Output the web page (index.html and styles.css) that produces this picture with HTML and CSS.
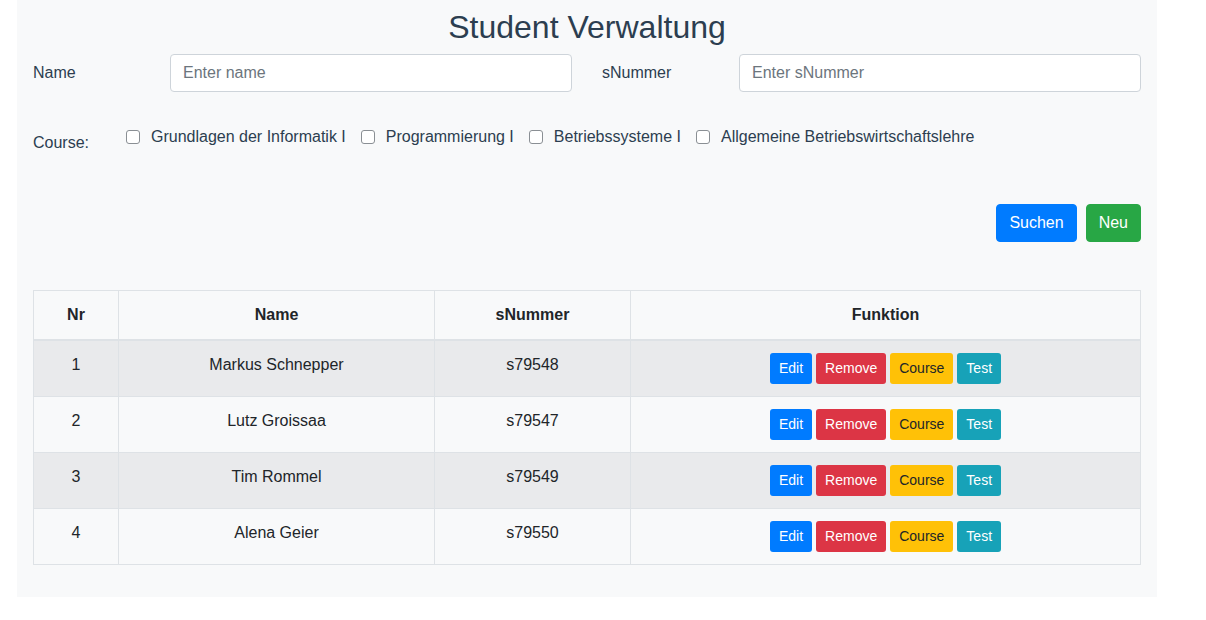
FILE: index.html
```html
<!DOCTYPE html>
<html lang="de">
<head>
<meta charset="utf-8">
<title>Student Verwaltung</title>
<link rel="stylesheet" href="styles.css">
</head>
<body>
<div class="page">
  <h2 class="title">Student Verwaltung</h2>
  <div class="fields">
    <div class="field">
      <label class="field-label">Name</label>
      <input class="form-input" type="text" placeholder="Enter name">
    </div>
    <div class="field">
      <label class="field-label">sNummer</label>
      <input class="form-input" type="text" placeholder="Enter sNummer">
    </div>
  </div>
  <div class="courses">
    <span class="courses-label">Course:</span>
    <div class="checks">
      <label class="check"><input type="checkbox" class="box"><span>Grundlagen der Informatik I</span></label>
      <label class="check"><input type="checkbox" class="box"><span>Programmierung I</span></label>
      <label class="check"><input type="checkbox" class="box"><span>Betriebssysteme I</span></label>
      <label class="check"><input type="checkbox" class="box"><span>Allgemeine Betriebswirtschaftslehre</span></label>
    </div>
  </div>
  <div class="actions">
    <button class="btn btn-blue">Suchen</button>
    <button class="btn btn-green">Neu</button>
  </div>
  <table class="table">
    <thead>
      <tr><th class="c-nr">Nr</th><th class="c-name">Name</th><th class="c-snr">sNummer</th><th>Funktion</th></tr>
    </thead>
    <tbody>
      <tr class="odd"><td>1</td><td>Markus Schnepper</td><td>s79548</td><td><div class="ops"><button class="sbtn blue">Edit</button><button class="sbtn red">Remove</button><button class="sbtn yellow">Course</button><button class="sbtn teal">Test</button></div></td></tr>
      <tr><td>2</td><td>Lutz Groissaa</td><td>s79547</td><td><div class="ops"><button class="sbtn blue">Edit</button><button class="sbtn red">Remove</button><button class="sbtn yellow">Course</button><button class="sbtn teal">Test</button></div></td></tr>
      <tr class="odd"><td>3</td><td>Tim Rommel</td><td>s79549</td><td><div class="ops"><button class="sbtn blue">Edit</button><button class="sbtn red">Remove</button><button class="sbtn yellow">Course</button><button class="sbtn teal">Test</button></div></td></tr>
      <tr><td>4</td><td>Alena Geier</td><td>s79550</td><td><div class="ops"><button class="sbtn blue">Edit</button><button class="sbtn red">Remove</button><button class="sbtn yellow">Course</button><button class="sbtn teal">Test</button></div></td></tr>
    </tbody>
  </table>
</div>
</body>
</html>
```
FILE: styles.css
```css
html, body {
  margin: 0;
  padding: 0;
  background: #ffffff;
}
body {
  font-family: "Liberation Sans", Arial, sans-serif;
  font-size: 16px;
  line-height: 1.5;
  color: #212529;
}
.page {
  margin-left: 17px;
  width: 1140px;
  box-sizing: border-box;
  background: #f8f9fa;
  padding: 8px 16px 32px 16px;
}
.title {
  margin: 0;
  text-align: center;
  font-size: 32px;
  font-weight: 400;
  line-height: 38px;
  color: #2c3e50;
}
.fields {
  display: flex;
  gap: 30px;
  margin-top: 8px;
}
.field {
  display: flex;
  align-items: center;
  width: 539px;
}
.field-label {
  width: 137px;
  flex: none;
  color: #2c3e50;
}
.form-input {
  flex: 1;
  box-sizing: border-box;
  height: 38px;
  padding: 6px 12px;
  border: 1px solid #ced4da;
  border-radius: 4px;
  background: #fff;
  font-family: inherit;
  font-size: 16px;
  color: #495057;
}
.form-input::placeholder {
  color: #6c757d;
}
.courses {
  display: flex;
  margin-top: 27px;
}
.courses-label {
  width: 93px;
  flex: none;
  padding-top: 12px;
  color: #2c3e50;
}
.checks {
  display: flex;
  gap: 15px;
}
.check {
  display: flex;
  align-items: center;
  gap: 11px;
  color: #2c3e50;
}
.box {
  appearance: none;
  -webkit-appearance: none;
  margin: 0;
  width: 14px;
  height: 14px;
  border: 1px solid #8a8f94;
  border-radius: 3px;
  background: #fff;
  box-sizing: border-box;
}
.actions {
  display: flex;
  justify-content: flex-end;
  gap: 9px;
  margin-top: 49px;
}
.btn {
  height: 38px;
  padding: 6px 12px;
  border: 1px solid transparent;
  border-radius: 4px;
  font-family: inherit;
  font-size: 16px;
  line-height: 24px;
  color: #fff;
}
.btn-blue { background: #007bff; border-color: #007bff; }
.btn-green { background: #28a745; border-color: #28a745; }
.table {
  width: 100%;
  margin-top: 48px;
  border-collapse: collapse;
  color: #212529;
}
.table th, .table td {
  border: 1px solid #dee2e6;
  padding: 12px;
  text-align: center;
  vertical-align: top;
  line-height: 24px;
}
.table th {
  font-weight: 700;
  border-bottom: 2px solid #dee2e6;
}
.c-nr { width: 60px; }
.c-name { width: 291px; }
.c-snr { width: 171px; }
.table tr.odd td {
  background: #e9eaec;
}
.ops {
  display: flex;
  justify-content: center;
  gap: 4px;
}
.sbtn {
  height: 31px;
  padding: 4px 8px;
  border: 1px solid transparent;
  border-radius: 3px;
  font-family: inherit;
  font-size: 14px;
  line-height: 21px;
  color: #fff;
}
.sbtn.blue { background: #007bff; }
.sbtn.red { background: #dc3545; }
.sbtn.yellow { background: #ffc107; color: #212529; }
.sbtn.teal { background: #17a2b8; }
```
